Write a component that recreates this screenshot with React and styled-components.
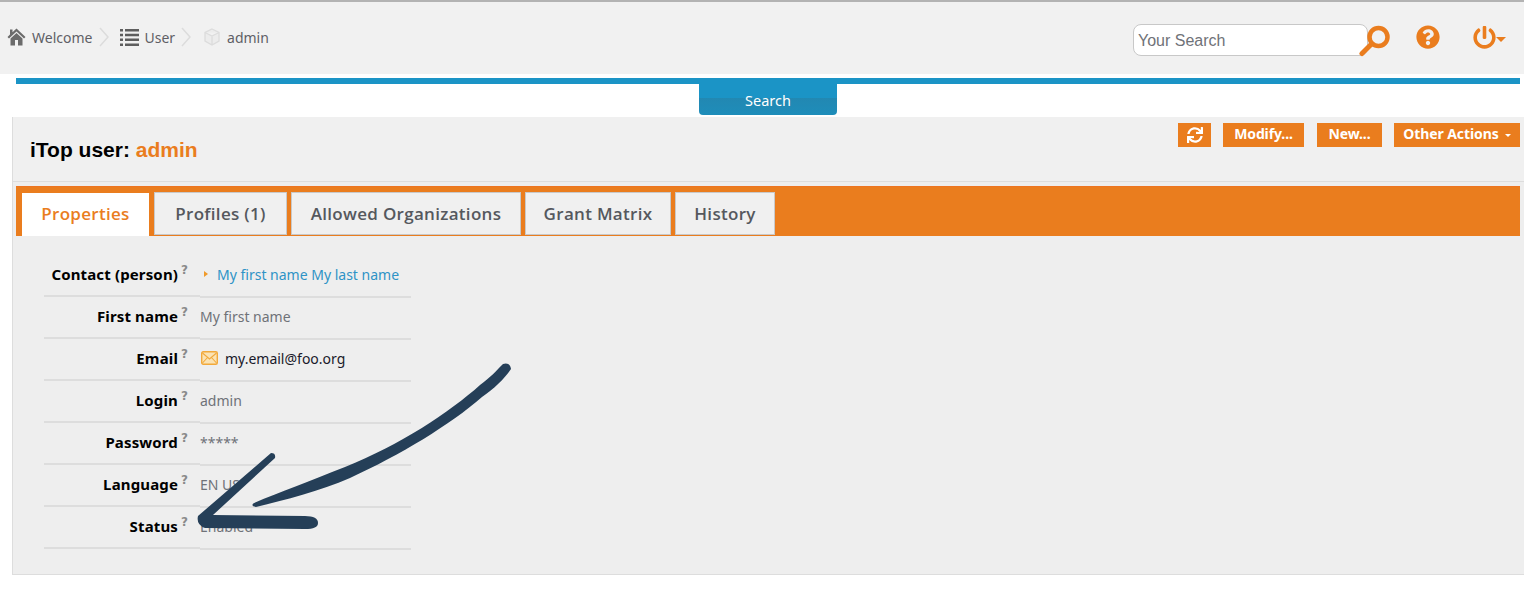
import React from "react";
import styled, { createGlobalStyle } from "styled-components";
import { FaQuestionCircle, FaPowerOff, FaSync } from "react-icons/fa";

const Global = createGlobalStyle`
  html, body { margin: 0; padding: 0; background: #fff; }
  #root { width: 1524px; height: 589px; overflow: hidden; }
`;
const ui = `"Noto Sans", "DejaVu Sans", sans-serif`;
const orange = "#ea7d1e";

const Page = styled.div`
  position: relative;
  width: 1524px;
  height: 589px;
  font-family: ${ui};
  overflow: hidden;
`;
const TopBar = styled.header`
  height: 72px;
  border-top: 2px solid #b3b3b3;
  background: #f1f1f1;
  display: flex;
  align-items: center;
  padding: 0 18px 0 7px;
`;
const Crumbs = styled.nav`
  display: flex;
  align-items: center;
  font-size: 14px;
  color: #5f5f66;
  flex: 1;
  margin-top: -2px;
`;
const Crumb = styled.span`
  display: flex;
  align-items: center;
  gap: ${(p) => p.$gap || 5}px;
`;
const Sep = styled.svg`
  width: 11px;
  height: 24px;
  margin: 0 ${(p) => p.$right || 10}px 0 ${(p) => p.$left || 7}px;
  fill: none;
  stroke: #dcdcdc;
  stroke-width: 1.5;
`;
const SearchWrap = styled.div`
  display: flex;
  align-items: center;
  margin-top: 4px;
`;
const SearchBox = styled.input`
  box-sizing: border-box;
  width: 235px;
  height: 32px;
  border: 1px solid #c8c8c8;
  border-radius: 8px;
  background: #fff;
  padding: 2px 4px 0;
  font: 16px "Liberation Sans", sans-serif;
  outline: none;
  &::placeholder { color: #6f7278; opacity: 1; }
`;
const Lens = styled.svg`
  width: 32px;
  height: 32px;
  margin: 2px 0 0 -9px;
  position: relative;
`;
const HelpBtn = styled.span`
  display: flex;
  color: ${orange};
  font-size: 24px;
  margin: -2px 0 0 25px;
`;
const PowerBtn = styled.span`
  display: flex;
  align-items: center;
  color: ${orange};
  font-size: 23px;
  margin: -2px 0 0 33px;
`;
const Caret = styled.i`
  display: inline-block;
  border-left: ${(p) => p.$s || 5}px solid transparent;
  border-right: ${(p) => p.$s || 5}px solid transparent;
  border-top: ${(p) => p.$s || 5}px solid ${(p) => p.$c || orange};
  margin-left: ${(p) => p.$m || 0}px;
  margin-top: 4px;
`;
const BlueLine = styled.div`
  height: 6px;
  margin: 4px 4px 0 16px;
  background: #1b94c6;
`;
const TabHandleRow = styled.div`
  display: flex;
  justify-content: center;
  height: 33px;
  padding-left: 12px;
`;
const SearchHandle = styled.button`
  width: 138px;
  height: 31px;
  border: 0;
  padding: 0;
  border-radius: 0 0 4px 4px;
  background: linear-gradient(#1b94c6 0, #1b94c6 14px, #2288b2 14px, #1e8dba 100%);
  color: #fff;
  font: 14.5px ${ui};
`;
const Panel = styled.main`
  box-sizing: border-box;
  margin-left: 12px;
  height: 458px;
  background: #eee;
  border-left: 1px solid #ddd;
  border-bottom: 1px solid #ddd;
`;
const TitleRow = styled.div`
  box-sizing: border-box;
  height: 65px;
  background: #f0f0f0;
  border-bottom: 1px solid #ddd;
  display: flex;
  justify-content: space-between;
  padding: 6px 4px 0 17px;
`;
const Title = styled.h1`
  margin: 15px 0 0;
  font: bold 21px "Liberation Sans", sans-serif;
  color: #000;
  span { color: ${orange}; }
`;
const Actions = styled.div`
  display: flex;
  gap: 12px;
  align-items: flex-start;
`;
const ActionBtn = styled.button`
  height: 24px;
  border: 0;
  padding: 0 0 4px;
  width: ${(p) => p.$w}px;
  margin-left: ${(p) => p.$ml || 0}px;
  background: ${orange};
  color: #fff;
  font: bold 14px ${ui};
  letter-spacing: -0.1px;
  display: flex;
  align-items: center;
  justify-content: center;
`;
const IconBtn = styled(ActionBtn)`
  padding: 0;
`;
const TabBar = styled.div`
  box-sizing: border-box;
  height: 50px;
  margin: 4px 4px 0 3px;
  padding: 6px 0 0 6px;
  background: ${orange};
  border-top: 1px solid #ee7420;
  display: flex;
  gap: 4px;
`;
const Tab = styled.div`
  box-sizing: border-box;
  width: ${(p) => p.$w}px;
  margin-right: ${(p) => (p.$active ? 1 : 0)}px;
  height: 43px;
  margin-top: ${(p) => (p.$active ? 0 : -1)}px;
  padding-bottom: ${(p) => (p.$active ? 2 : 0)}px;
  display: flex;
  align-items: center;
  justify-content: center;
  background: ${(p) => (p.$active ? "#fff" : "#f0f0f0")};
  color: ${(p) => (p.$active ? orange : "#55585e")};
  border: ${(p) => (p.$active ? "0" : "1px solid #c9c9c9")};
  font: 600 17px "Open Sans", sans-serif;
  letter-spacing: 0.3px;
`;
const Fields = styled.div`
  margin: 20px 0 0 31px;
  width: 367px;
`;
const Row = styled.div`
  display: grid;
  grid-template-columns: 156px 211px;
  height: 42px;
`;
const Label = styled.div`
  box-sizing: border-box;
  height: 41px;
  border-bottom: 2px solid #ddd;
  display: flex;
  justify-content: flex-end;
  align-items: center;
  padding: 0 22px 3px 0;
  font: bold 15px ${ui};
  color: #000;
  letter-spacing: 0.14px;
  position: relative;
`;
const Hint = styled.span`
  position: absolute;
  right: 12px;
  top: 7px;
  font: bold 12px "DejaVu Sans", sans-serif;
  color: #8a8a8a;
`;
const Value = styled.div`
  box-sizing: border-box;
  height: 42px;
  padding-bottom: 4px;
  border-bottom: 2px solid #ddd;
  display: flex;
  align-items: center;
  font-size: 14px;
  color: ${(p) => p.$c || "#6f7278"};
`;
const DotArrow = styled.i`
  border-top: 3px solid transparent;
  border-bottom: 3px solid transparent;
  border-left: 4px solid #f09a2a;
  margin: 0 9px 0 4px;
`;
const Link = styled.a`
  color: #2f93c6;
`;
const MailText = styled.span`
  color: #1a1a2a;
`;
const Mail = styled.svg`
  width: 17px;
  height: 14px;
  margin-right: 7px;
  margin-left: 1px;
`;
const Arrow = styled.svg`
  position: absolute;
  left: 0;
  top: 0;
  pointer-events: none;
`;

const rows = [
  ["Contact (person)", <><DotArrow /><Link>My first name My last name</Link></>],
  ["First name", "My first name"],
  ["Email", <><Mail viewBox="0 0 17 14"><rect x="0.7" y="0.7" width="15.6" height="12.6" rx="1.5" fill="#fbe3b4" stroke="#f2a93b" strokeWidth="1.4"/><path d="M1.5 2 8.5 8 15.5 2M1.5 12 6.5 6.5M15.5 12 10.5 6.5" fill="none" stroke="#f2a93b" strokeWidth="1.1"/></Mail><MailText>my.email@foo.org</MailText></>],
  ["Login", "admin"],
  ["Password", "*****"],
  ["Language", "EN US"],
  ["Status", "Enabled"],
];

function Chevron({ left, right }) {
  return <Sep viewBox="0 0 11 24" $left={left} $right={right}><path d="M1 3 9 12 1 21" /></Sep>;
}

export default function App() {
  return (
    <Page>
      <Global />
      <TopBar>
        <Crumbs>
          <Crumb $gap={6}>
            <svg width="19" height="18" viewBox="0 0 19 18" fill="#6b6b6b">
              <path d="M9.5 0.5 18.5 9 17 10.5 9.5 3.5 2 10.5 0.5 9 3 6.6V1.5H5.5V4.3Z" />
              <path d="M3.5 10.5 9.5 5 15.5 10.5V17.5H11V12H8V17.5H3.5Z" />
            </svg>
            Welcome
          </Crumb>
          <Chevron />
          <Crumb $gap={5}>
            <svg width="19" height="17" viewBox="0 0 19 17" fill="#5e5e5e">
              <path d="M0 0H3V2.5H0ZM5 0H19V2.5H5ZM0 4.8H3V7.3H0ZM5 4.8H19V7.3H5ZM0 9.6H3V12.1H0ZM5 9.6H19V12.1H5ZM0 14.4H3V16.9H0ZM5 14.4H19V16.9H5Z" />
            </svg>
            User
          </Crumb>
          <Chevron left={6} right={12} />
          <Crumb $gap={7}>
            <svg width="16" height="18" viewBox="0 0 16 18" fill="none" stroke="#dcdcdc" strokeWidth="1.3">
              <path d="M8 1 15 4.5V13L8 17 1 13V4.5ZM1 4.5 8 8 15 4.5M8 8V17" fill="#ececec" />
            </svg>
            admin
          </Crumb>
        </Crumbs>
        <SearchWrap>
          <SearchBox placeholder="Your Search" />
          <Lens viewBox="0 0 32 32">
            <circle cx="19.5" cy="12" r="9" fill="none" stroke={orange} strokeWidth="4.5" />
            <path d="M12 19.5 3 28.5" stroke={orange} strokeWidth="5" strokeLinecap="round" />
          </Lens>
        </SearchWrap>
        <HelpBtn><FaQuestionCircle /></HelpBtn>
        <PowerBtn><FaPowerOff /><Caret /></PowerBtn>
      </TopBar>
      <BlueLine />
      <TabHandleRow><SearchHandle>Search</SearchHandle></TabHandleRow>
      <Panel>
        <TitleRow>
          <Title>iTop user: <span>admin</span></Title>
          <Actions>
            <IconBtn $w={33}><FaSync size={16} /></IconBtn>
            <ActionBtn $w={81}>Modify...</ActionBtn>
            <ActionBtn $w={65} $ml={1}>New...</ActionBtn>
            <ActionBtn $w={126}>Other Actions<Caret $c="#fff" $s={3} $m={6} /></ActionBtn>
          </Actions>
        </TitleRow>
        <TabBar>
          <Tab $active $w={127}>Properties</Tab>
          <Tab $w={133}>Profiles (1)</Tab>
          <Tab $w={230}>Allowed Organizations</Tab>
          <Tab $w={146}>Grant Matrix</Tab>
          <Tab $w={100}>History</Tab>
        </TabBar>
        <Fields>
          {rows.map(([l, v]) => (
            <Row key={l}>
              <Label>{l}<Hint>?</Hint></Label>
              <Value>{v}</Value>
            </Row>
          ))}
        </Fields>
      </Panel>
      <Arrow width="1524" height="589" viewBox="0 0 1524 589">
        <path fill="#253f58" d="M503 364Q510 362 511 369C505 378 495 388 482 397C450 425 400 455 350 478C320 491 285 500 256 507Q250 506 254 503C280 492 310 481 345 467C400 445 450 412 480 385C490 378 497 370 503 364Z" />
        <path fill="#253f58" d="M271 453Q276 453 275 458L213 515L305 516Q318 516 318 523Q318 529 305 529L205 528Q196 525 198 516Z" />
      </Arrow>
    </Page>
  );
}
